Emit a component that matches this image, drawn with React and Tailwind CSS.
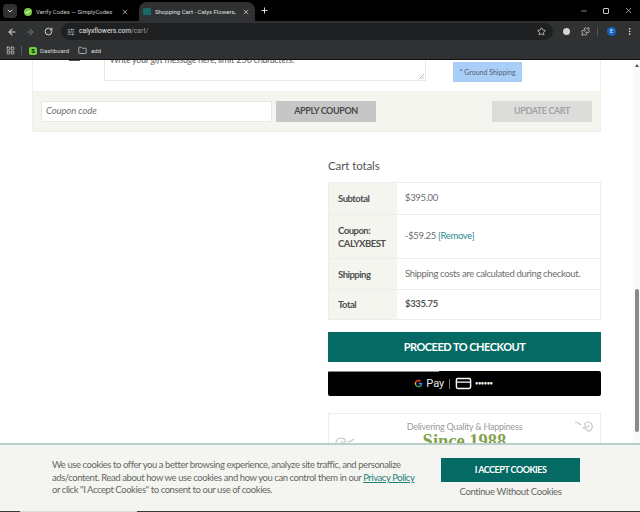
import React from "react";
import { ArrowLeft, ArrowRight, RotateCw, SlidersHorizontal, Star, Puzzle, MoreVertical, X, Plus, ChevronDown, Minus, LayoutGrid, Folder, Check, CreditCard } from "lucide-react";

const ui = { fontFamily: '"Roboto", "Liberation Sans", sans-serif' };
const body = { fontFamily: '"Lato", "Open Sans", sans-serif' };

function Tab({ active, icon, title, cls }) {
  return (
    <div className={`flex h-[19px] items-center gap-[4px] rounded-t-lg pl-[4px] pr-[5px] text-[6px] ${cls} ${active ? "bg-[#2f3132] text-[#dfe1e3]" : "text-[#c4c7c9]"}`}>
      {icon}
      <span className="flex-1 truncate">{title}</span>
      <X size={8} strokeWidth={2} className="text-[#e6e6e6]" />
    </div>
  );
}

function Row({ h, label, children }) {
  return (
    <div className={`flex border-t border-[#eceee9] first:border-t-0 ${h}`}>
      <div className="flex w-[68px] shrink-0 items-center bg-[#f5f5f0] pl-[9px] text-[9.5px] leading-[13px] font-bold tracking-[-0.5px] text-[#4f4f4f]">{label}</div>
      <div className="flex flex-1 items-center pl-[8px] text-[9.5px] tracking-[-0.35px] text-[#6e6e6e]">{children}</div>
    </div>
  );
}

export default function App() {
  return (
    <div className="flex h-[512px] w-[640px] flex-col overflow-hidden bg-white" style={ui}>
      <div className="flex h-[21px] shrink-0 items-end bg-black pl-[3px]">
        <div className="mr-[3px] mb-[3px] flex h-[14px] w-[14px] items-center justify-center rounded bg-[#2f3132]">
          <ChevronDown size={8} strokeWidth={3} className="text-[#d8d8d8]" />
        </div>
        <Tab cls="w-[114px] mr-[5px]" title="Verify Codes — SimplyCodes" icon={<span className="flex h-[8px] w-[8px] items-center justify-center rounded-full bg-[#7ac943]"><Check size={6} strokeWidth={4} className="text-white" /></span>} />
        <Tab cls="w-[116px]" active title="Shopping Cart - Calyx Flowers," icon={<span className="h-[7px] w-[8px] bg-[#176a63]" />} />
        <Plus size={9} strokeWidth={2.5} className="mb-[6px] ml-[5px] text-[#e6e6e6]" />
        <div className="mb-[6px] ml-auto flex items-center gap-[15px] pr-[7px] text-[#c8c8c8]">
          <Minus size={8} />
          <span className="h-[6px] w-[6px] rounded-[1px] border border-[#c8c8c8]" />
          <X size={9} />
        </div>
      </div>
      <div className="flex h-[21px] shrink-0 items-center bg-[#2f3132] pl-[7px]">
        <ArrowLeft size={10} strokeWidth={2.5} className="text-[#dcdcdc]" />
        <ArrowRight size={10} strokeWidth={2.5} className="ml-[8px] text-[#6f7172]" />
        <RotateCw size={9} strokeWidth={2.5} className="ml-[9px] text-[#dcdcdc]" />
        <div className="ml-[8px] flex h-[17px] w-[492px] items-center rounded-full bg-[#1f2021] pl-[6px] pr-[7px] text-[6.7px]">
          <SlidersHorizontal size={8} className="text-[#c8c8c8]" />
          <span className="ml-[4px] text-[#e4e4e4]">calyxflowers.com<span className="text-[#9a9c9e]">/cart/</span></span>
          <Star size={9} strokeWidth={2} className="ml-auto text-[#dcdcdc]" />
        </div>
        <span className="ml-[10px] h-[7px] w-[7px] rounded-full bg-[#d4d4d4]" />
        <Puzzle size={9} strokeWidth={2} className="ml-[11px] text-[#dcdcdc]" />
        <span className="ml-[7px] h-[9px] w-px bg-[#55585a]" />
        <span className="ml-[9px] flex h-[9px] w-[9px] items-center justify-center rounded-full bg-[#1565c0] text-[5px] text-white">E</span>
        <MoreVertical size={9} strokeWidth={2.5} className="ml-[9px] text-[#dcdcdc]" />
      </div>
      <div className="flex h-[18px] shrink-0 items-center border-b border-[#111] bg-[#2f3132] pl-[6px] text-[6px] text-[#dedede]">
        <LayoutGrid size={9} className="text-[#cfcfcf]" />
        <span className="ml-[6px] h-[9px] w-px bg-[#55585a]" />
        <span className="ml-[7px] flex h-[8px] w-[8px] items-center justify-center rounded-[2px] bg-[#6fd13a] text-[6px] font-bold text-black">S</span>
        <span className="ml-[3px]">Dashboard</span>
        <Folder size={9} className="ml-[9px] text-[#cfcfcf]" />
        <span className="ml-[4px]">add</span>
      </div>

      <div className="relative flex min-h-0 flex-1 overflow-hidden" style={body}>
        <div className="min-w-0 flex-1">
          <div className="mx-[32px] border-x border-b border-[#f0f0eb]">
            <div className="flex h-[31px] items-start">
              <span className="ml-[36px] h-px w-[11px] bg-[#555]" />
              <div className="relative ml-[24px] h-[21px] w-[322px] border-x border-b border-[#e8e8e2] pl-[5px] text-[9.5px] italic tracking-[-0.27px] leading-[0px] text-[#666]">
                Write your gift message here, limit 250 characters.
                <svg className="absolute right-[1px] bottom-[1px]" width="5" height="5" viewBox="0 0 5 5"><path d="M0 5L5 0M2.500 5L5 2.500" stroke="#999" strokeWidth="0.7" /></svg>
              </div>
              <div className="mt-[2px] ml-[27px] flex h-[20px] w-[69px] items-center justify-center bg-[#a9cff9] text-[7px] text-[#55606e]">* Ground Shipping</div>
            </div>
            <div className="flex h-[40px] items-center bg-[#f5f5f0] pr-[8px] pl-[8px]">
              <div className="flex h-[21px] w-[231px] items-center border border-[#e8e8e2] bg-white pl-[4px] text-[9.5px] italic tracking-[-0.1px] text-[#6f6f6f]">Coupon code</div>
              <div className="ml-[4px] flex h-[21px] w-[100px] items-center justify-center bg-[#c6c6c6] text-[9px] font-bold tracking-[-0.4px] text-[#4a4a4a]">APPLY COUPON</div>
              <div className="ml-auto flex h-[21px] w-[100px] items-center justify-center bg-[#dcdcda] text-[9px] font-bold tracking-[-0.4px] text-[#a3a3a3]">UPDATE CART</div>
            </div>
          </div>

          <div className="mt-[26px] mr-[32px] ml-[328px]">
            <h2 className="h-[16px] text-[11.5px] leading-[16px] tracking-[-0.1px] text-[#555]">Cart totals</h2>
            <div className="mt-[8px] border border-[#eceee9]">
              <Row h="h-[31px]" label="Subtotal">$395.00</Row>
              <Row h="h-[44px]" label={<span>Coupon:<br />CALYXBEST</span>}>
                <span>-$59.25 <span className="text-[#2f8a8a]">[Remove]</span></span>
              </Row>
              <Row h="h-[31px]" label="Shipping">Shipping costs are calculated during checkout.</Row>
              <Row h="h-[30px]" label="Total"><b className="text-[#555]">$335.75</b></Row>
            </div>
            <div className="mt-[12px] flex h-[30px] items-center justify-center bg-[#046a63] text-[11px] font-bold tracking-[-0.5px] text-white">PROCEED TO CHECKOUT</div>
            <div className="relative mt-[9px] flex h-[25px] items-center justify-center gap-[3px] rounded-[2px] bg-black pr-[22px] text-white">
              <span className="absolute top-0 left-0 h-px w-[111px] bg-[#8a8a8a]" />
              <svg width="9" height="9" viewBox="0 0 24 24">
                <path d="M22 12.2c0-.7-.1-1.400-.2-2H12v4h5.600a5 5 0 0 1-2 3l3.200 2.500c2-1.800 3.200-4.500 3.200-7.500z" fill="#4285f4" />
                <path d="M12 22c2.700 0 5-.9 6.800-2.300l-3.200-2.500c-.9.600-2.100 1-3.600 1-2.700 0-5-1.800-5.800-4.300l-3.300 2.600A10 10 0 0 0 12 22z" fill="#34a853" />
                <path d="M6.200 13.900a6 6 0 0 1 0-3.800L2.900 7.500a10 10 0 0 0 0 9z" fill="#fbbc05" />
                <path d="M12 5.800c1.500 0 2.800.5 3.900 1.500l2.900-2.900A10 10 0 0 0 2.900 7.500l3.300 2.600C7 7.600 9.300 5.800 12 5.800z" fill="#ea4335" />
              </svg>
              <span className="text-[11px] leading-none text-[#e8e8e8]" style={{ fontFamily: '"Roboto", sans-serif' }}>Pay</span>
              <span className="mx-[2px] h-[10px] w-px bg-[#777]" />
              <CreditCard size={17} strokeWidth={2} className="text-white" />
              <span className="text-[5px] leading-none font-bold">••••••</span>
            </div>
            <div className="relative mt-[17px] flex h-[80px] flex-col items-center border border-[#eceee9] pt-[7px]">
              <span className="text-[9px] leading-[12px] tracking-[-0.25px] text-[#9a9a9a]">Delivering Quality &amp; Happiness</span>
              <span className="-mt-[2px] text-[18.5px] leading-[20px] font-bold text-[#83a24f]" style={{ fontFamily: '"Liberation Serif", serif' }}>Since 1988</span>
              <svg className="absolute top-[5px] right-[6px]" width="20" height="14" viewBox="0 0 20 14" fill="none" stroke="#c8c8c8" strokeWidth="1.200">
                <path d="M1 3c3 0 4 2 6 3M8 9c2-1 4 0 5 2s4 1 5-2-1-6-4-6-4 2-3 4 4 1 4-1" />
              </svg>
              <svg className="absolute top-[22px] left-[6px]" width="20" height="9" viewBox="0 0 20 9" fill="none" stroke="#c8c8c8" strokeWidth="1.200">
                <path d="M1 8c0-4 2-6 5-6s5 2 4 4-4 1-3-1M12 6c2 0 5-1 7-3" />
              </svg>
            </div>
          </div>
        </div>

        <div className="w-[7px] shrink-0 bg-[#fafafa]">
          <div className="mx-auto mt-[4px] h-0 w-0 border-x-[2px] border-b-[3px] border-x-transparent border-b-[#555]" />
          <div className="mx-auto mt-[222px] h-[143px] w-[4px] rounded-full bg-[#8a8a8a]" />
        </div>

        <div className="absolute right-0 bottom-0 left-0 flex h-[68px] border-t-2 border-[#b7d0ca] bg-[#f4f5f0] pr-[7px]">
          <p className="mt-[14px] ml-[52px] w-[370px] shrink-0 text-[9.5px] leading-[12.5px] tracking-[-0.43px] whitespace-nowrap text-[#666]">
            We use cookies to offer you a better browsing experience, analyze site traffic, and personalize<br />ads/content. Read about how we use cookies and how you can control them in our <span className="text-[#1f7f7a] underline">Privacy Policy</span><br />or click "I Accept Cookies" to consent to our use of cookies.
          </p>
          <div className="ml-[19px] flex w-[139px] flex-col items-center pt-[13px]">
            <div className="flex h-[24px] w-full items-center justify-center bg-[#046a63] text-[9px] font-bold tracking-[-0.5px] text-white">I ACCEPT COOKIES</div>
            <span className="mt-[3px] text-[9.5px] leading-[14px] tracking-[-0.38px] text-[#666]">Continue Without Cookies</span>
          </div>
        </div>
      </div>
      <div className="flex h-px shrink-0 bg-[#3a3a38]">
        <span className="ml-[20px] w-[117px] bg-[#dcdcd8]" />
      </div>
    </div>
  );
}
